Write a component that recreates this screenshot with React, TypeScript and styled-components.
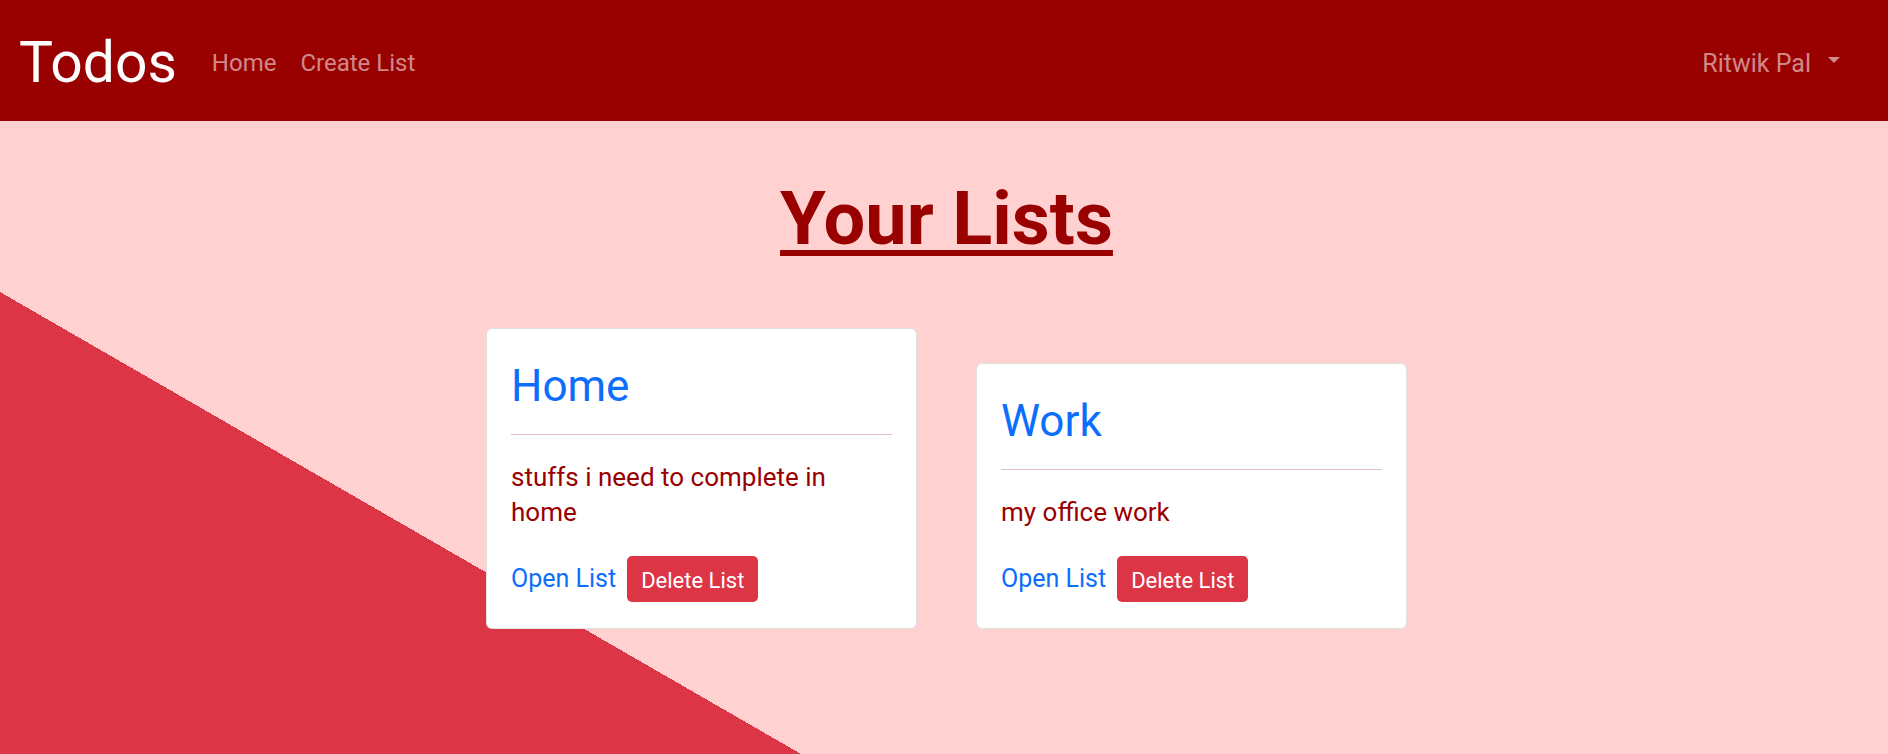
import styled, { createGlobalStyle } from "styled-components";

type List = { title: string; description: string };

const LISTS: List[] = [
  { title: "Home", description: "stuffs i need to complete in home" },
  { title: "Work", description: "my office work" },
];

export default function App(): JSX.Element {
  return (
    <Page>
      <GlobalStyle />
      <Navbar>
        <Brand href="#">Todos</Brand>
        <NavLinks>
          <NavLink href="#">Home</NavLink>
          <NavLink href="#">Create List</NavLink>
        </NavLinks>
        <UserMenu href="#">Ritwik Pal</UserMenu>
      </Navbar>
      <Main>
        <Heading>Your Lists</Heading>
        <CardRow>
          {LISTS.map((list) => (
            <Card key={list.title}>
              <CardTitle>{list.title}</CardTitle>
              <Rule />
              <Description>{list.description}</Description>
              <Actions>
                <OpenLink href="#">Open List</OpenLink>
                <DeleteButton type="button">Delete List</DeleteButton>
              </Actions>
            </Card>
          ))}
        </CardRow>
      </Main>
    </Page>
  );
}

const GlobalStyle = createGlobalStyle`
  * {
    box-sizing: border-box;
  }

  body {
    margin: 0;
    font-family: Roboto, "Liberation Sans", sans-serif;
  }
`;

const Page = styled.div`
  min-height: 100vh;
  /* red wedge in the lower left corner */
  background: linear-gradient(to top right, #dc3545 50%, transparent 50%) left
      bottom / 801px 462px no-repeat,
    #ffd1d1;
`;

const Navbar = styled.nav`
  display: flex;
  align-items: center;
  height: 121px;
  padding: 6px 48px 0 19px;
  background: #990000;
`;

const Brand = styled.a`
  margin-right: 35px;
  font-size: 57px;
  line-height: 1.2;
  color: #fff;
  text-decoration: none;
`;

const NavLinks = styled.div`
  display: flex;
  gap: 24px;
`;

const NavLink = styled.a`
  font-size: 24px;
  line-height: 1.2;
  color: rgba(255, 255, 255, 0.55);
  text-decoration: none;
`;

const UserMenu = styled(NavLink)`
  margin-left: auto;
  font-size: 25px;

  &::after {
    content: "";
    display: inline-block;
    margin-left: 17px;
    vertical-align: 0.33em;
    border-top: 6px solid;
    border-left: 6px solid transparent;
    border-right: 6px solid transparent;
  }
`;

const Main = styled.main`
  padding: 54px 0 0 5px;
`;

const Heading = styled.h1`
  margin: 0;
  text-align: center;
  font-size: 74px;
  font-weight: 700;
  line-height: 1.2;
  color: #990000;
  text-decoration: underline;
  text-decoration-thickness: 6px;
  text-underline-offset: 6px;
`;

const CardRow = styled.div`
  display: flex;
  justify-content: center;
  align-items: flex-end;
  gap: 59px;
  margin-top: 64px;
`;

const Card = styled.div`
  width: 431px;
  padding: 25px 24px 26px;
  background: #fff;
  border: 1px solid rgba(0, 0, 0, 0.12);
  border-radius: 6px;
`;

const CardTitle = styled.h2`
  margin: 6px 0 0;
  font-size: 44px;
  font-weight: 400;
  line-height: 1.2;
  color: #0d6efd;
`;

const Rule = styled.hr`
  margin: 21px 0 0;
  border: 0;
  border-top: 1px solid #e6bfbf;
`;

const Description = styled.p`
  margin: 25px 0 0;
  font-size: 26px;
  line-height: 35px;
  color: #990000;
`;

const Actions = styled.div`
  display: flex;
  align-items: center;
  gap: 11px;
  margin-top: 26px;
`;

const OpenLink = styled.a`
  font-size: 25px;
  line-height: 1.2;
  color: #0d6efd;
  text-decoration: none;
`;

const DeleteButton = styled.button`
  height: 46px;
  padding: 3px 14px 0;
  border: none;
  border-radius: 5px;
  background: #dc3545;
  color: #fff;
  font-family: inherit;
  font-size: 22px;
  cursor: pointer;
`;
